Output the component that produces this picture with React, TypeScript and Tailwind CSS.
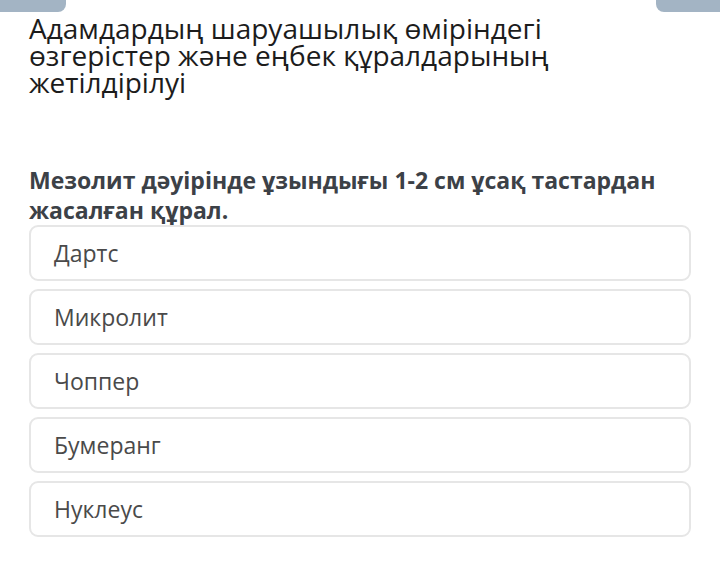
export default function App() {
  const options = ['Дартс', 'Микролит', 'Чоппер', 'Бумеранг', 'Нуклеус']

  return (
    <div className="h-[580px] w-[720px] bg-white font-['Open_Sans',sans-serif]">
      {/* top tabs */}
      <div className="flex h-[12px] justify-between">
        <div className="w-[66px] rounded-br-[8px] bg-[#a3b4c4]" />
        <div className="w-[64px] rounded-bl-[8px] bg-[#a3b4c4]" />
      </div>

      <div className="px-[29px]">
        <h1 className="mt-[3px] w-[600px] text-[28px] font-normal leading-[27px] text-[#1c1c1c]">
          Адамдардың шаруашылық өміріндегі өзгерістер және еңбек құралдарының жетілдірілуі
        </h1>

        <p className="mt-[69px] text-[23px] font-bold leading-[30px] text-[#3c4147]">
          Мезолит дәуірінде ұзындығы 1-2 см ұсақ тастардан жасалған құрал.
        </p>

        <div className="flex w-[662px] flex-col gap-2">
          {options.map((o) => (
            <div
              key={o}
              className="flex h-[56px] items-center rounded-[9px] border-2 border-[#e6e6e6] px-[23px] text-[23px] text-[#4a4a4a]"
            >
              {o}
            </div>
          ))}
        </div>
      </div>
    </div>
  )
}
